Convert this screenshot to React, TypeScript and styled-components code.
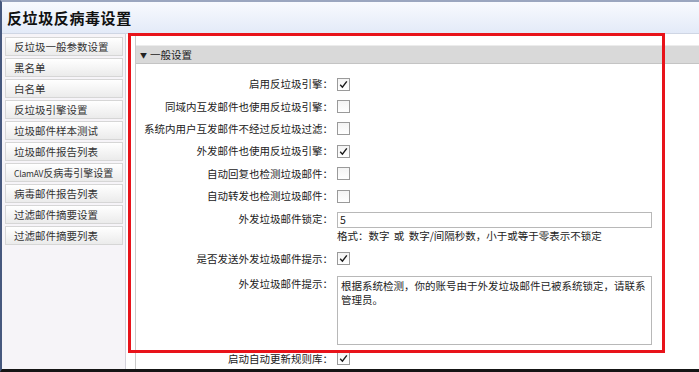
import * as React from "react";
import styled, { createGlobalStyle } from "styled-components";

const GlobalStyle = createGlobalStyle`
  html, body {
    margin: 0;
    padding: 0;
    background: #ffffff;
  }
  body {
    font-family: "Noto Sans CJK SC", "DejaVu Sans", sans-serif;
    font-size: 10.5px;
    color: #222222;
  }
`;

const Frame = styled.div`
  position: relative;
  width: 699px;
  height: 372px;
  box-sizing: border-box;
  border-top: 2px solid #9ba6bf;
  border-left: 2px solid #46587e;
  border-bottom: 3px solid #151515;
  display: flex;
  flex-direction: column;
  overflow: hidden;
`;

const Header = styled.div`
  height: 31px;
  flex: none;
  display: flex;
  align-items: center;
  padding-left: 5px;
  background: linear-gradient(#f8fafe, #e3eaf8);
  border-bottom: 1px solid #cfd6e4;
`;

const Title = styled.h1`
  margin: 0;
  font-size: 15px;
  font-weight: bold;
  color: #111111;
  letter-spacing: 0.6px;
`;

const Body = styled.div`
  flex: 1;
  display: flex;
  min-height: 0;
`;

const Sidebar = styled.nav`
  width: 123px;
  flex: none;
  padding-top: 3px;
  background: #f6f4f8;
  border-right: 1px solid #d2d0da;
  display: flex;
  flex-direction: column;
  gap: 2px;
`;

const NavButton = styled.div<{ $tight?: boolean }>`
  margin-left: 3px;
  width: 118px;
  height: 19px;
  box-sizing: border-box;
  display: flex;
  align-items: center;
  padding-left: 8px;
  background: linear-gradient(#ffffff, #ebebeb);
  border: 1px solid #d6d6d6;
  color: #333333;
  white-space: nowrap;
  overflow: hidden;
  font-size: ${(p) => (p.$tight ? "10px" : "10.5px")};
`;

const Latin = styled.span`
  font-size: 8.5px;
  letter-spacing: -0.2px;
`;

const Content = styled.main`
  flex: 1;
  margin-left: 9px;
  border-left: 1px solid #c9c9c9;
  padding-top: 11px;
`;

const SectionHeader = styled.div`
  height: 17px;
  display: flex;
  align-items: center;
  padding-left: 4px;
  gap: 2px;
  background: #d9d9d9;
  border-top: 1px solid #ececec;
  border-bottom: 1px solid #c4c4c4;
  color: #222222;
`;

const Caret = styled.span`
  font-size: 7px;
  width: 8px;
`;

const Form = styled.div`
  padding-top: 9px;
  display: flex;
  flex-direction: column;
`;

const Row = styled.div<{ $h?: number; $top?: number; $align?: string }>`
  display: flex;
  align-items: ${(p) => p.$align || "center"};
  min-height: ${(p) => (p.$h ? `${p.$h}px` : "auto")};
  margin-top: ${(p) => p.$top || 0}px;
`;

const Label = styled.div<{ $pad?: number }>`
  width: 197px;
  flex: none;
  text-align: right;
  line-height: 14px;
  white-space: nowrap;
  padding-top: ${(p) => p.$pad || 0}px;
`;

const Control = styled.div`
  margin-left: 4px;
  display: flex;
  flex-direction: column;
`;

const Box = styled.span`
  width: 13px;
  height: 13px;
  box-sizing: border-box;
  display: flex;
  align-items: center;
  justify-content: center;
  border: 1px solid #9a9a9a;
  background: linear-gradient(#f4f4f4, #ffffff);
`;

const TextInput = styled.div`
  width: 315px;
  height: 16px;
  box-sizing: border-box;
  border: 1px solid #b8b8b8;
  padding-left: 2px;
  line-height: 14px;
  background: #ffffff;
`;

const Hint = styled.div`
  margin-top: 1px;
  line-height: 14px;
  color: #222222;
  word-spacing: 2px;
`;

const TextArea = styled.div`
  width: 315px;
  height: 69px;
  box-sizing: border-box;
  border: 1px solid #b8b8b8;
  padding: 2px 3px;
  line-height: 14px;
  background: #ffffff;
`;

const Highlight = styled.div`
  position: absolute;
  left: 126px;
  top: 31px;
  width: 537px;
  height: 320px;
  box-sizing: border-box;
  border: 3px solid #e8131a;
  pointer-events: none;
`;

const Check = ({ on }: { on?: boolean }) => (
  <Box>
    {on && (
      <svg width="9" height="9" viewBox="0 0 9 9">
        <path d="M1.2 4.8 L3.4 7.2 L7.8 1.4" fill="none" stroke="#1a1a1a" strokeWidth="1.4" />
      </svg>
    )}
  </Box>
);

const navItems = [
  "反垃圾一般参数设置",
  "黑名单",
  "白名单",
  "反垃圾引擎设置",
  "垃圾邮件样本测试",
  "垃圾邮件报告列表",
  "ClamAV反病毒引擎设置",
  "病毒邮件报告列表",
  "过滤邮件摘要设置",
  "过滤邮件摘要列表",
];

const checks: [string, boolean][] = [
  ["启用反垃圾引擎：", true],
  ["同域内互发邮件也使用反垃圾引擎：", false],
  ["系统内用户互发邮件不经过反垃圾过滤：", false],
  ["外发邮件也使用反垃圾引擎：", true],
  ["自动回复也检测垃圾邮件：", false],
  ["自动转发也检测垃圾邮件：", false],
];

export default function App() {
  return (
    <>
      <GlobalStyle />
      <Frame>
        <Header>
          <Title>反垃圾反病毒设置</Title>
        </Header>
        <Body>
          <Sidebar>
            {navItems.map((n) =>
              n.startsWith("ClamAV") ? (
                <NavButton key={n} $tight>
                  <Latin>ClamAV</Latin>
                  {n.slice(6)}
                </NavButton>
              ) : (
                <NavButton key={n}>{n}</NavButton>
              )
            )}
          </Sidebar>
          <Content>
            <SectionHeader>
              <Caret>▼</Caret>
              <span>一般设置</span>
            </SectionHeader>
            <Form>
              {checks.map(([label, on]) => (
                <Row key={label} $h={22.4}>
                  <Label>{label}</Label>
                  <Control>
                    <Check on={on} />
                  </Control>
                </Row>
              ))}
              <Row $top={5} $align="flex-start">
                <Label>外发垃圾邮件锁定：</Label>
                <Control>
                  <TextInput>5</TextInput>
                  <Hint>格式：数字 或 数字/间隔秒数，小于或等于零表示不锁定</Hint>
                </Control>
              </Row>
              <Row $h={22.4} $top={4}>
                <Label>是否发送外发垃圾邮件提示：</Label>
                <Control>
                  <Check on />
                </Control>
              </Row>
              <Row $top={6} $align="flex-start">
                <Label $pad={1}>外发垃圾邮件提示：</Label>
                <Control>
                  <TextArea>根据系统检测，你的账号由于外发垃圾邮件已被系统锁定，请联系管理员。</TextArea>
                </Control>
              </Row>
              <Row $h={22} $top={3}>
                <Label>启动自动更新规则库：</Label>
                <Control>
                  <Check on />
                </Control>
              </Row>
            </Form>
          </Content>
        </Body>
        <Highlight />
      </Frame>
    </>
  );
}
